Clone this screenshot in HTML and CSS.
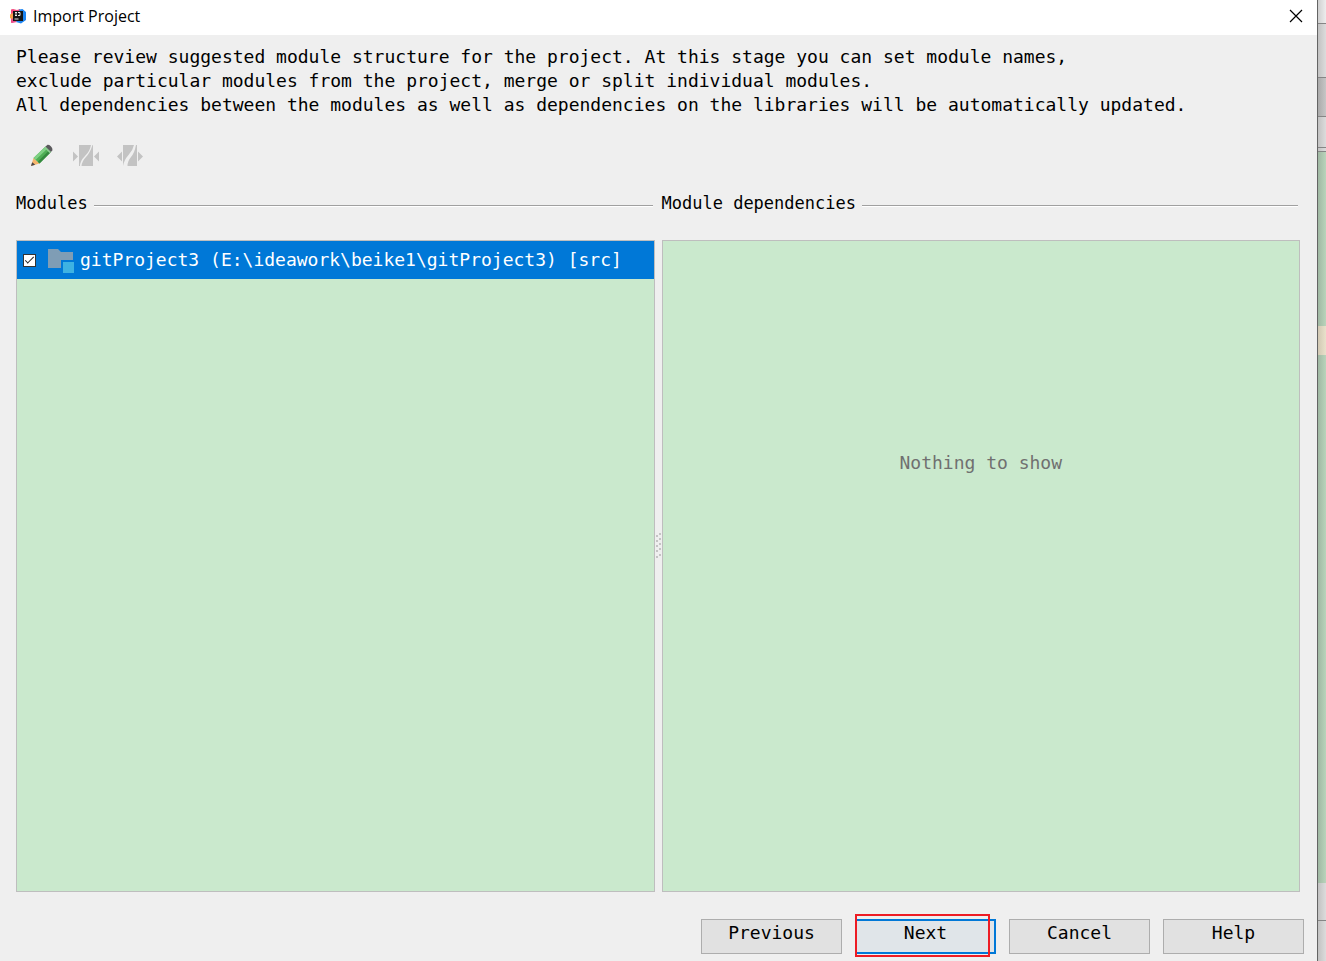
FILE: index.html
```html
<!DOCTYPE html>
<html lang="en">
<head>
<meta charset="utf-8">
<title>Import Project</title>
<link rel="stylesheet" href="styles.css">
</head>
<body>
<div class="desktop">
  <main class="dialog">
    <header class="titlebar">
      <svg class="logo" viewBox="0 0 16 16" aria-hidden="true">
        <path d="M1 1.500 3 1l4 1 3-1v6l-6 7-3 1V9z" fill="#f4457a"/>
        <path d="M0 6.500 3 5v7l-3-2z" fill="#f8a04a"/>
        <path d="M1 11l3-1 3 4-5 1z" fill="#e8508c"/>
        <path d="M9 1.500 12.500 1 16 4v8l-5 3.500L6 14l5-6z" fill="#1f86f2"/>
        <path d="M3 3h10v10H3z" fill="#151515"/>
        <path d="M5 4.500h2M6 4.500v3M5 7.500h2M8 4.500h2v3H8M4.500 11h4" fill="none" stroke="#fff" stroke-width=".9"/>
      </svg>
      <h1 class="title">Import Project</h1>
      <button class="close" type="button" aria-label="Close">
        <svg class="close-icon" viewBox="0 0 12 12"><path d="M0 0l12 12M12 0L0 12" stroke="#000" fill="none" stroke-width="1.200"/></svg>
      </button>
    </header>
    <p class="intro">Please review suggested module structure for the project. At this stage you can set module names,<br>exclude particular modules from the project, merge or split individual modules.<br>All dependencies between the modules as well as dependencies on the libraries will be automatically updated.</p>
    <div class="toolbar">
      <button class="tool" type="button" aria-label="Rename">
        <svg class="tool-icon" viewBox="0 0 28 24">
          <path d="M3 22 5.500 14 11.500 19.500z" fill="#f5b56b"/>
          <path d="M3 22 4.200 18.200 7.200 20.800z" fill="#4a4549"/>
          <path d="M5.500 14 17 3 22.500 8.500 11.500 19.500z" fill="#4fae55"/>
          <path d="M5.500 14 17 3 19 5 7.500 16z" fill="#7fd184"/>
          <path d="M9.700 17.800 20.700 6.800 22.500 8.500 11.500 19.500z" fill="#34893e"/>
          <path d="M17 3 19.500.8Q21 .5 22.800 2.200T24.500 6.200L22.500 8.500z" fill="#5a595c"/>
          <path d="M16.300 3.700 17.500 2.500 23 8 21.800 9.200z" fill="#8ccb91"/>
        </svg>
      </button>
      <button class="tool" type="button" aria-label="Merge" disabled>
        <svg class="tool-icon" viewBox="0 0 28 24">
          <path d="M1 7.500v10l5-5zM27 7.500v10l-5-5z" fill="#c3c3c3"/>
          <path d="M7 1h12Q18 7 13 12T8 22H7zM20.500 1H21v21H9.500Q10 17 14 13T20.500 1z" fill="#c3c3c3"/>
        </svg>
      </button>
      <button class="tool" type="button" aria-label="Split" disabled>
        <svg class="tool-icon" viewBox="0 0 28 24">
          <path d="M6 7.500v10l-5-5zM22 7.500v10l5-5z" fill="#c3c3c3"/>
          <path d="M7 1h11Q17 6 12.500 11T7 22zM20 1H21v21h-9.500Q11.500 17 15 13T20 1z" fill="#c3c3c3"/>
        </svg>
      </button>
    </div>
    <div class="panes">
      <section class="pane">
        <h2 class="pane-title">Modules</h2>
        <div class="list">
          <label class="row">
            <input class="check" type="checkbox" checked>
            <svg class="folder" viewBox="0 0 28 26" aria-hidden="true">
              <path d="M0 2h10l3 3h12v16H0z" fill="#7f9db5"/>
              <path d="M13 13h12v12H13z" fill="#0078d7"/>
              <path d="M15 15h11v11H15z" fill="#3eb2e2"/>
            </svg>
            <span>gitProject3 (E:\ideawork\beike1\gitProject3) [src]</span>
          </label>
        </div>
      </section>
      <div class="splitter">
        <svg class="grip" viewBox="0 0 7 28" aria-hidden="true">
          <path d="M1 4h2v2H1zM4 2h2v2H4zM1 9h2v2H1zM4 7h2v2H4zM1 14h2v2H1zM4 12h2v2H4zM1 19h2v2H1zM4 17h2v2H4zM1 25h2v2H1zM4 23h2v2H4z" fill="#c4c4c4"/>
        </svg>
      </div>
      <section class="pane">
        <h2 class="pane-title">Module dependencies</h2>
        <div class="list empty">Nothing to show</div>
      </section>
    </div>
    <footer class="actions">
      <button class="btn" type="button">Previous</button>
      <div class="marked"><button class="btn primary" type="button">Next</button><span class="mark"></span></div>
      <button class="btn" type="button">Cancel</button>
      <button class="btn" type="button">Help</button>
    </footer>
  </main>
  <div class="behind" aria-hidden="true">
    <div class="band top"></div>
    <div class="band tabs"></div>
    <div class="band dark"></div>
    <div class="band tools"></div>
    <div class="band thin"></div>
    <div class="band editor"></div>
    <div class="band caret"></div>
    <div class="band rest"></div>
    <div class="band status"></div>
    <div class="band bottom"></div>
  </div>
</div>
</body>
</html>
```
FILE: styles.css
```css
* { box-sizing: border-box; }
body { margin: 0; background: #efefef; color: #000; font: 18px/24px "DejaVu Sans Mono", monospace; }
button { font: inherit; color: inherit; }
.desktop { display: flex; min-height: 100vh; }
.dialog { flex: 1; min-width: 0; display: flex; flex-direction: column; background: #efefef; border-right: 1px solid #646464; }

.titlebar { display: flex; align-items: center; height: 35px; padding: 0 15px 4px 10px; background: #fff; }
.logo { width: 16px; height: 16px; margin-right: 7px; }
.title { flex: 1; margin: 0; font: 16px/20px "Open Sans", "Noto Sans", sans-serif; }
.close { display: flex; padding: 0; border: 0; background: none; }
.close-icon { width: 12px; height: 12px; overflow: visible; }

.intro { margin: 0; padding: 10px 16px 0; white-space: nowrap; }
.toolbar { display: flex; gap: 16px; padding: 27px 28px 0; }
.tool { display: flex; padding: 0; border: 0; background: none; }
.tool-icon { width: 28px; height: 24px; }

.panes { flex: 1; display: flex; padding: 23px 17px 0 16px; }
.pane { flex: 1; min-width: 0; display: flex; flex-direction: column; }
.pane-title { display: flex; align-items: center; gap: 6px; margin: 0 2px 25px 0; font-size: 17px; line-height: 24px; font-weight: normal; }
.pane-title::after { content: ""; flex: 1; height: 1px; margin-top: 5px; background: #a0a0a0; border-bottom: 1px solid #fff; }
.list { flex: 1; background: #cae9cd; border: 1px solid #bebebe; }
.row { display: flex; align-items: center; height: 38px; padding-left: 6px; background: #0078d7; color: #fff; white-space: nowrap; }
.check { appearance: none; width: 13px; height: 13px; margin: 0 12px 0 0; border: 1px solid #333; background: #fff; display: grid; place-items: center; }
.check:checked::before { content: ""; width: 8px; height: 3px; border: solid #222; border-width: 0 0 1px 1px; transform: translateY(-1px) rotate(-45deg); }
.folder { width: 28px; height: 26px; margin-right: 4px; }
.empty { padding-top: 210px; text-align: center; color: #707070; }
.splitter { display: flex; align-items: center; width: 7px; padding-top: 6px; }
.grip { display: block; width: 7px; height: 28px; }

.actions { display: flex; justify-content: flex-end; gap: 13px; padding: 27px 13px 7px; }
.btn { width: 141px; height: 35px; padding: 0 0 8px; background: #e1e1e1; border: 1px solid #adadad; }
.primary { display: block; background: #e0e5e9; border: 2px solid #0078d7; }
.marked { position: relative; }
.mark { position: absolute; inset: -5px 6px -3px 0; border: 2px solid #ed1c24; pointer-events: none; }

.behind { width: 8px; display: flex; flex-direction: column; }
.band { border-bottom: 1px solid #858585; background: linear-gradient(90deg, #c2c2c2, #dcdcdc); }
.top { height: 24px; background: linear-gradient(90deg, #d0d0d0, #ededed); }
.tabs { height: 54px; }
.dark { height: 39px; background: linear-gradient(90deg, #aaa, #c6c6c6); }
.tools { height: 31px; }
.thin { height: 4px; }
.editor, .rest { background: linear-gradient(90deg, #a0b8a3, #b9d4bb); border: 0; }
.editor { height: 174px; }
.caret { height: 29px; background: linear-gradient(90deg, #d1c8b3, #e9e1cb); border: 0; }
.rest { flex: 1; }
.status { height: 38px; }
.bottom { height: 40px; border: 0; }
```
